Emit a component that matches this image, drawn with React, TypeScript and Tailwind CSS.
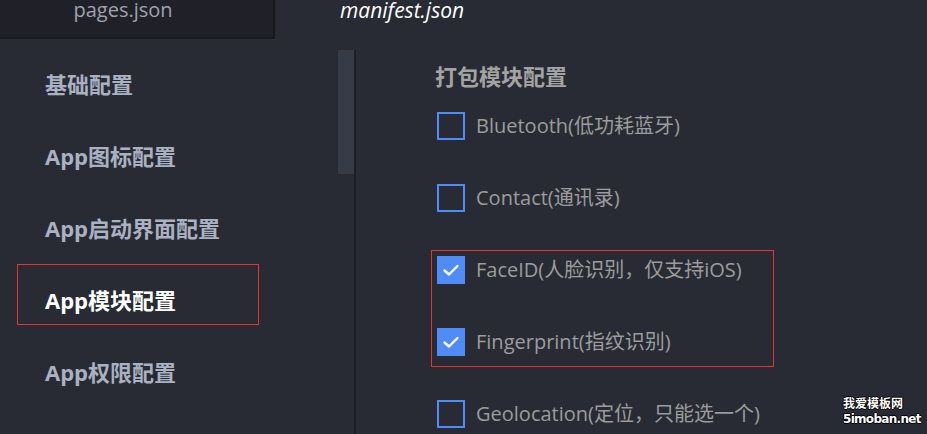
import React from "react";

const font = "font-['Open_Sans','Noto_Sans_CJK_SC',sans-serif]";

const menu = [
  { label: "基础配置" },
  { label: "App图标配置" },
  { label: "App启动界面配置" },
  { label: "App模块配置", active: true },
  { label: "App权限配置" },
];

const modules = [
  { label: "Bluetooth(低功耗蓝牙)", checked: false },
  { label: "Contact(通讯录)", checked: false },
  { label: "FaceID(人脸识别，仅支持iOS)", checked: true },
  { label: "Fingerprint(指纹识别)", checked: true },
  { label: "Geolocation(定位，只能选一个)", checked: false },
];

function Checkbox({ checked }: { checked: boolean }) {
  if (checked) {
    return (
      <div className="w-[28px] h-[28px] bg-[#4f8cf7] flex items-center justify-center shrink-0">
        <svg width="18" height="14" viewBox="0 0 18 14" fill="none">
          <path d="M2.5 7.5 L7 11.5 L15.5 3" stroke="white" strokeWidth="2.4" strokeLinecap="round" strokeLinejoin="round" />
        </svg>
      </div>
    );
  }
  return <div className="w-[28px] h-[28px] border-2 border-[#4f8cf7] shrink-0" />;
}

export default function App() {
  return (
    <div className={`relative w-[927px] h-[434px] overflow-hidden bg-[#282b34] ${font}`}>
      {/* tabs */}
      <div className="flex h-[39px]">
        <div className="w-[275px] h-[39px] bg-[#1f2028] border-r-2 border-b-2 border-[#18191f] flex justify-center">
          <span className="text-[20px] leading-[24px] text-[#9ea3ad] mt-[-2px] ml-[-27px]">pages.json</span>
        </div>
        <div className="flex-1 flex">
          <span className="ml-[65px] mt-[-2px] text-[21px] leading-[24px] italic text-white">manifest.json</span>
        </div>
      </div>

      <div className="flex h-[395px]">
        {/* sidebar */}
        <div className="w-[356px] pt-[11px] flex">
          <div className="relative flex-1 border-r-2 border-[#1d1e25] pt-[-2px]">
            <div className="-mt-[2px]">
              {menu.map((m) => (
                <div key={m.label} className="h-[72px] flex items-center pl-[45px]">
                  <span className={`text-[22px] font-bold ${m.active ? "text-white" : "text-[#aab1c2]"}`}>{m.label}</span>
                </div>
              ))}
            </div>
            <div className="absolute right-0 top-0 w-[16px] h-[124px] bg-[#363b48]" />
          </div>
        </div>

        {/* content */}
        <div className="flex-1 pt-[23px] pl-[79px]">
          <div className="h-[28px] flex items-center text-[22px] font-bold text-[#a3a3a3]">打包模块配置</div>
          {modules.map((m) => (
            <div key={m.label} className="h-[72px] flex items-center gap-[11px] pl-[2px]">
              <Checkbox checked={m.checked} />
              <span className="text-[20px] text-[#9c9c9c]">{m.label}</span>
            </div>
          ))}
        </div>
      </div>

      {/* annotation boxes */}
      <div className="absolute left-[17px] top-[264px] w-[242px] h-[61px] border border-[#e8322f]" />
      <div className="absolute left-[431px] top-[250px] w-[343px] h-[117px] border border-[#e8322f]" />

      {/* watermark */}
      <div className="absolute left-[843px] top-[397px] text-white text-[12px] leading-[15px] font-bold font-['DejaVu_Sans','Noto_Sans_CJK_SC',sans-serif] [text-shadow:1px_0_0_#000,-1px_0_0_#000,0_1px_0_#000,0_-1px_0_#000]">
        <div>我爱模板网</div>
        <div className="tracking-[-0.7px]">5imoban.net</div>
      </div>
    </div>
  );
}
